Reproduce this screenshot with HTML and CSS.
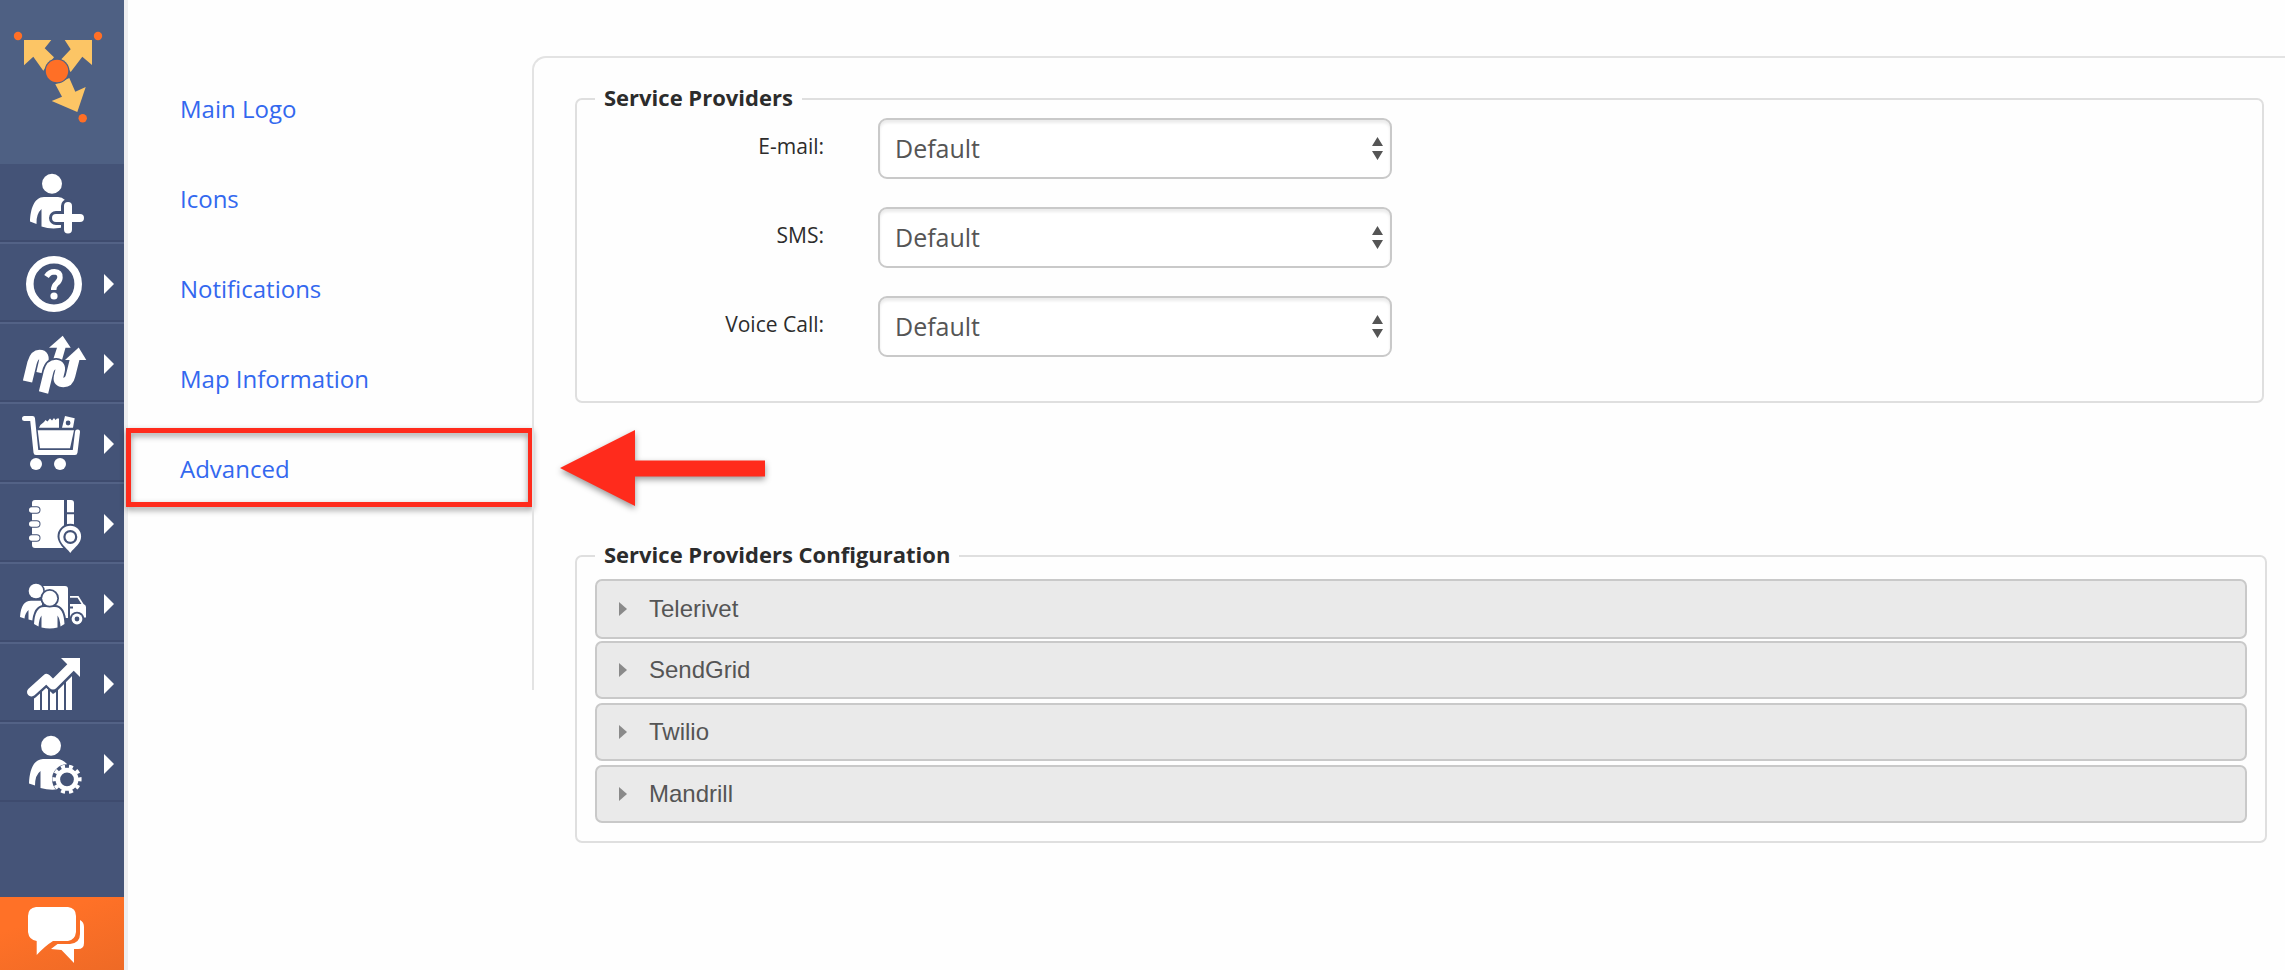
FILE: index.html
```html
<!DOCTYPE html>
<html lang="en">
<head>
<meta charset="utf-8">
<title>Advanced settings</title>
<link rel="stylesheet" href="styles.css">
</head>
<body>
<div class="app">
  <aside class="sidebar">
    <a class="logo" href="#" aria-label="Home">
      <svg width="124" height="162" viewBox="0 0 124 162">
        <g fill="#fcc565">
          <path d="M24 40H51.300L44.700 48.300L54 57.300L43.300 70.700L33.300 56.700L24 65.300Z"/>
          <path d="M64.700 40H92V65L82.300 56.700L70.700 72L61.300 59.300L70.700 49.300Z"/>
          <path d="M55.300 84.300L69.300 78L75.300 91.700L85.700 87L77.300 112L51.700 101L62 96.700Z"/>
        </g>
        <circle cx="57" cy="71" r="12.500" fill="#4e6083"/>
        <g fill="#ff6f26">
          <circle cx="57" cy="71" r="11.200"/>
          <circle cx="18" cy="36" r="4.200"/><circle cx="98" cy="36" r="4.200"/><circle cx="82.700" cy="118.300" r="4.200"/>
        </g>
      </svg>
    </a>
    <nav class="menu" aria-label="Main">
      <a class="menu-item" href="#" aria-label="Add user">
        <svg class="icon" viewBox="0 2 124 76">
          <circle cx="52" cy="21.700" r="10"/>
          <path d="M30 59.500C30.500 47 34 35.200 44 35H58Q62 35 65 38V65Q52 68 41.500 64.500V47Q36 52 36.500 62Z"/>
          <path class="cut" stroke-width="14" d="M68 44V67.500M56 56H80"/>
          <path class="line" stroke-width="8" d="M68 44V67.500M56 56H80"/>
        </svg>
      </a>
      <a class="menu-item" href="#" aria-label="Help">
        <svg class="icon" viewBox="0 2 124 76">
          <circle class="line" cx="54" cy="42" r="24.200" stroke-width="7.600"/>
          <path class="line butt" stroke-width="5.400" d="M46.500 34.500Q49.500 29.800 54.500 29.800Q60.300 30.200 60 35.500Q59.800 38.800 56.500 41.500Q53.600 44 53.700 48"/>
          <circle cx="54" cy="54" r="3.600"/>
          <path d="M104 32L114 42L104 52Z"/>
        </svg>
      </a>
      <a class="menu-item" href="#" aria-label="Routes">
        <svg class="icon" viewBox="0 2 124 76">
          <path class="line butt" stroke-width="9.500" d="M27.500 59.500L32 41Q34.500 32.500 39.500 32.500Q45.500 32.500 43.500 40L41 51"/>
          <path d="M62.700 13.700L70.700 25.700H65.500L62 38H53L57 25.700H49Z"/>
          <path class="cut butt" stroke-width="13" d="M43.500 70.500L48.500 50Q50.500 42.500 56 42.500Q61.500 43 60 49L58.500 55Q57.500 60.500 63.500 60.500Q69 60.500 70.500 54L74.500 38"/>
          <path class="line butt" stroke-width="9.500" d="M43.500 70.500L48.500 50Q50.500 42.500 56 42.500Q61.500 43 60 49L58.500 55Q57.500 60.500 63.500 60.500Q69 60.500 70.500 54L75 36"/>
          <path d="M78.700 25.500L86.300 38H65Z"/>
          <path d="M104 32L114 42L104 52Z"/>
        </svg>
      </a>
      <a class="menu-item" href="#" aria-label="Orders">
        <svg class="icon" viewBox="0 2 124 76">
          <path class="line" stroke-width="5" d="M24.500 16.500H32.500L36 50.500H75L77.500 30"/>
          <path d="M37.700 28.300H74L70 46.300H40Z"/>
          <path d="M39 25.700Q40 22.500 44 20L45.500 18L47.500 19.500L50 16.500L52 18.500L54 16L55.500 18L57 16.500H59V25.700Z"/>
          <path fill-rule="evenodd" d="M62 25.700L65 14L74.700 16.300L73 25.700ZM70.500 21A2.400 2.400 0 1 0 65.700 21A2.400 2.400 0 1 0 70.500 21Z"/>
          <circle cx="36" cy="62" r="6"/><circle cx="60" cy="62" r="6"/>
          <path d="M104 32L114 42L104 52Z"/>
        </svg>
      </a>
      <a class="menu-item" href="#" aria-label="Address book">
        <svg class="icon" viewBox="0 2 124 76">
          <path d="M35 18H64V66H35Q32 66 32 63V21Q32 18 35 18ZM67 18H71Q74 18 74 21V30.300H67ZM67 32.300H74V52H67Z"/>
          <g class="ring">
            <rect x="29" y="25.300" width="10.500" height="5.400" rx="2.700"/>
            <rect x="29" y="39.300" width="10.500" height="5.400" rx="2.700"/>
            <rect x="29" y="53.300" width="10.500" height="5.400" rx="2.700"/>
          </g>
          <path class="pin" d="M70.300 71C66 65 59.500 61.500 59.500 54.500A10.800 10.800 0 0 1 81.100 54.500C81.100 61.500 74.600 65 70.300 71Z"/>
          <circle class="hole" cx="70.300" cy="55" r="7"/><circle cx="70.300" cy="55" r="4.800"/>
          <path d="M104 32L114 42L104 52Z"/>
        </svg>
      </a>
      <a class="menu-item" href="#" aria-label="Team and vehicles">
        <svg class="icon" viewBox="0 2 124 76">
          <path d="M43 24H65Q68 24 68 27V56H43Z"/>
          <path d="M70 34H78.500L83.500 42Q86 43 86 45V55.500H70Z"/>
          <path class="hole" d="M70 35.700H77.500L81.500 42H70ZM70 44.500H73V46.500H70Z"/>
          <circle class="hole" cx="77" cy="57" r="7.300"/><circle cx="77" cy="57" r="5.400"/><circle class="hole" cx="77" cy="57" r="2.400"/>
          <circle class="hole" cx="36" cy="29" r="8.800"/><circle cx="36" cy="29" r="7.300"/>
          <path d="M20 55Q21 38.700 31 38.700H42V58.500Q34 59.500 28.500 57.500V48Q25 51 24.500 56.500Z"/>
          <path class="edge" d="M34 62Q35 45 44 45H55Q63.500 45 64.500 62L60.500 64.500Q60 57 57.500 53.500V65.500Q50 67.500 41.500 65.500V53.500Q39 57 38.500 64.500Z"/>
          <circle class="hole" cx="49.700" cy="36.300" r="9.300"/><circle cx="49.700" cy="36.300" r="7.500"/>
          <path d="M104 32L114 42L104 52Z"/>
        </svg>
      </a>
      <a class="menu-item" href="#" aria-label="Reports">
        <svg class="icon" viewBox="0 2 124 76">
          <path d="M34 55L40 50V68H34ZM42 48L46 45L48 47V68H42ZM50 49L53 52L56 50V68H50ZM58 48L64 42V68H58ZM66 40L72 34V68H66Z"/>
          <path class="cut" stroke-width="12" d="M31.500 51L46.500 37.500L53 44L71 26"/>
          <path class="line" stroke-width="9" d="M31.500 50L46.500 36.500L53 43L71 25"/>
          <path d="M61 16H80V35Z"/>
          <path d="M104 32L114 42L104 52Z"/>
        </svg>
      </a>
      <a class="menu-item" href="#" aria-label="User settings">
        <svg class="icon" viewBox="0 2 124 76">
          <circle cx="51" cy="23.700" r="10"/>
          <path d="M29 61.500C29.500 49 33 37.200 43 37H57Q62 37 67 42V65Q54 70 40.500 66V49Q35 53 35 63.500Z"/>
          <circle class="hole" cx="67" cy="57.300" r="15"/>
          <circle class="line" cx="67" cy="57.300" r="9.200" stroke-width="4.600"/>
          <circle class="line butt" cx="67" cy="57.300" r="12.800" stroke-width="3.600" pathLength="100" stroke-dasharray="5 5" stroke-dashoffset="2.500"/>
          <path d="M104 32L114 42L104 52Z"/>
        </svg>
      </a>
    </nav>
    <button class="chat" type="button" aria-label="Chat">
      <svg width="124" height="73" viewBox="0 0 124 73" fill="#fff">
        <path d="M36 10H68Q76 11 76 19V35Q75 43 68 44H53Q45 49 36.700 58V44Q29 43 28 35V19Q28 11 36 10Z"/>
        <path d="M80 23Q84 25 84 30V46Q84 52 78 52H74V66L61.500 53L51 52L57.500 47H70Q80 46 80 37Z"/>
      </svg>
    </button>
  </aside>

  <main class="content">
    <nav class="tabs" aria-label="Settings">
      <a class="tab" href="#">Main Logo</a>
      <a class="tab" href="#">Icons</a>
      <a class="tab" href="#">Notifications</a>
      <a class="tab" href="#">Map Information</a>
      <a class="tab tab-marked" href="#" aria-current="page">Advanced
        <svg class="pointer" width="206" height="78" viewBox="0 0 206 78"><path d="M0 39L75 1V31.500H205V47.500H75V77Z"/></svg>
      </a>
    </nav>
    <section class="panel">
      <fieldset class="group providers">
        <legend class="group-title">Service Providers</legend>
        <div class="field">
          <label class="field-label" for="email">E-mail:</label>
          <div class="picker">
            <select class="picker-select" id="email"><option>Default</option></select>
            <svg class="picker-arrows" width="11" height="23" viewBox="0 0 11 23"><path d="M5.500 0L11 9H0ZM5.500 23L0 14H11Z"/></svg>
          </div>
        </div>
        <div class="field">
          <label class="field-label" for="sms">SMS:</label>
          <div class="picker">
            <select class="picker-select" id="sms"><option>Default</option></select>
            <svg class="picker-arrows" width="11" height="23" viewBox="0 0 11 23"><path d="M5.500 0L11 9H0ZM5.500 23L0 14H11Z"/></svg>
          </div>
        </div>
        <div class="field">
          <label class="field-label" for="voice">Voice Call:</label>
          <div class="picker">
            <select class="picker-select" id="voice"><option>Default</option></select>
            <svg class="picker-arrows" width="11" height="23" viewBox="0 0 11 23"><path d="M5.500 0L11 9H0ZM5.500 23L0 14H11Z"/></svg>
          </div>
        </div>
      </fieldset>
      <fieldset class="group configuration">
        <legend class="group-title">Service Providers Configuration</legend>
        <div class="accordion">
          <button class="accordion-item" type="button" aria-expanded="false">Telerivet</button>
          <button class="accordion-item" type="button" aria-expanded="false">SendGrid</button>
          <button class="accordion-item" type="button" aria-expanded="false">Twilio</button>
          <button class="accordion-item" type="button" aria-expanded="false">Mandrill</button>
        </div>
      </fieldset>
    </section>
  </main>
</div>
</body>
</html>
```

FILE: styles.css
```css
* { box-sizing: border-box; }

body {
  margin: 0;
  background: #fefefe;
  color: #2c2c2c;
  font-family: "Open Sans", "Noto Sans", sans-serif;
}

.app {
  display: flex;
  min-height: 100vh;
}

/* Sidebar */
.sidebar {
  display: flex;
  flex-direction: column;
  flex: none;
  width: 128px;
  background: #455478;
  border-right: 4px solid #eeeef0;
}

.logo {
  display: block;
  height: 162px;
  background: #4e6083;
}

.logo svg,
.icon,
.chat svg { display: block; }

.menu-item {
  display: block;
  border-top: 2px solid #536286;
  border-bottom: 2px solid #3e4b6e;
  background: #445377;
}

.menu-item:first-child { border-top-color: #4e6083; }

.icon {
  width: 124px;
  height: 76px;
  fill: #fff;
}

.icon .line,
.icon .cut {
  fill: none;
  stroke: #fff;
  stroke-linecap: round;
  stroke-linejoin: round;
}

.icon .cut { stroke: #445377; }
.icon .butt { stroke-linecap: butt; }
.icon .hole { fill: #445377; }

.icon .ring,
.icon .pin,
.icon .edge {
  stroke: #445377;
  stroke-width: 2px;
  paint-order: stroke;
}

.icon .pin,
.icon .edge { stroke-width: 4px; }

.chat {
  margin: auto 0 0;
  padding: 0;
  border: 0;
  background: linear-gradient(160deg, #ff7127 30%, #ee6a26);
}

/* Settings tabs */
.content {
  display: flex;
  flex: 1;
  min-width: 0;
}

.tabs {
  flex: none;
  width: 404px;
  padding-top: 64px;
}

.tab {
  display: block;
  padding-left: 52px;
  color: #3368ef;
  font-size: 24px;
  line-height: 90px;
  text-decoration: none;
}

.tab-marked { position: relative; }

.tab-marked::after {
  content: "";
  position: absolute;
  inset: 4px -1px 7px -2px;
  border: 5px solid #ff2b1c;
  filter: drop-shadow(0 3px 3px rgba(0, 0, 0, 0.4));
}

.pointer {
  position: absolute;
  top: 5px;
  left: 432px;
  z-index: 1;
  fill: #ff2b1c;
  overflow: visible;
  filter: drop-shadow(0 3px 3px rgba(0, 0, 0, 0.4));
}

/* Panel */
.panel {
  position: relative;
  flex: 1;
  min-width: 0;
  padding: 87px 18px 0 43px;
}

.panel::before {
  content: "";
  position: absolute;
  top: 56px;
  right: 0;
  left: 0;
  height: 632px;
  border-top: 2px solid #e3e3e3;
  border-left: 2px solid #e3e3e3;
  border-top-left-radius: 14px;
}

.group {
  position: relative;
  min-width: 0;
  margin: 0;
  border: 2px solid #dfdfdf;
  border-radius: 7px;
}

.providers {
  margin-right: 3px;
  padding: 7px 18px 44px;
}

.configuration {
  margin-top: 141px;
  padding: 11px 18px 18px;
}

.group-title {
  padding: 0 9px 4px;
  font-size: 22px;
  font-weight: 700;
  line-height: 20px;
}

.field {
  display: grid;
  grid-template-columns: 229px 514px;
  column-gap: 54px;
}

.field + .field { margin-top: 28px; }

.field-label {
  padding-top: 14px;
  font-size: 21px;
  line-height: 28px;
  text-align: right;
}

.picker { position: relative; }

.picker-select {
  display: block;
  width: 100%;
  height: 61px;
  padding: 0 40px 2px 15px;
  appearance: none;
  border: 2px solid #c9c9c9;
  border-radius: 9px;
  background: #fff;
  box-shadow: inset 0 3px 3px rgba(0, 0, 0, 0.08);
  color: #555;
  font-family: inherit;
  font-size: 25px;
}

.picker-arrows {
  position: absolute;
  top: 19px;
  right: 9px;
  fill: #555;
  pointer-events: none;
}

.accordion {
  display: grid;
  row-gap: 4px;
}

.accordion-item {
  display: flex;
  align-items: center;
  gap: 22px;
  height: 58px;
  padding: 0 22px;
  border: 2px solid #c9c9c9;
  border-radius: 7px;
  background: #eaeaea;
  color: #555;
  font-family: "Liberation Sans", Arial, sans-serif;
  font-size: 24px;
}

.accordion-item:first-child {
  height: 60px;
  margin-bottom: -2px;
}

.accordion-item::before {
  content: "";
  border-left: 8px solid #8a8a8a;
  border-top: 7px solid transparent;
  border-bottom: 7px solid transparent;
}
```
